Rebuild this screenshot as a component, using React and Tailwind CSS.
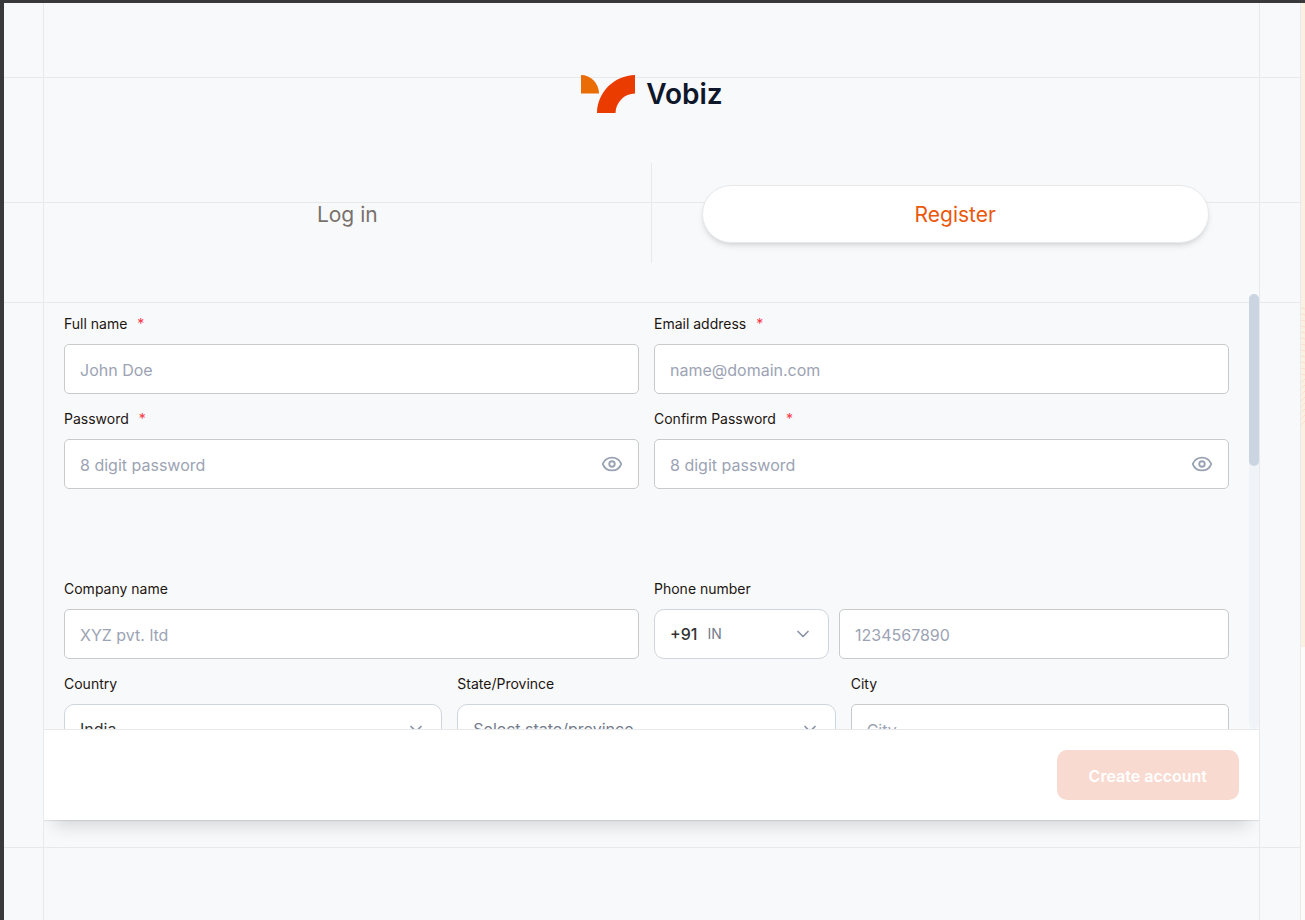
import React, { useState } from 'react';
import { Eye, EyeOff, ChevronDown } from 'lucide-react';

const inputClass = "w-full h-[50px] px-[15px] pt-0.5 bg-white border border-[#c9cacc] rounded-[5px] text-base text-gray-800 placeholder:text-[#9ca3b4] outline-none focus:border-orange-500";
const selectClass = "w-full h-[50px] px-[15px] bg-white border border-[#cfd5dc] rounded-[10px] text-base appearance-none outline-none focus:border-orange-500";

const Logo = () => (
    <div className="flex items-center gap-2.5">
        <svg width="56" height="40" viewBox="0 0 56 40" aria-hidden="true">
            <path d="M1 1A18 18.5 0 0 1 19 19.5H1Z" fill="#ea6c04" />
            <path d="M55 1V19.5A20 19.5 0 0 0 35.5 39H17C17.5 18 34 1.500 55 1Z" fill="#ea3c00" />
        </svg>
        <span className="text-[28px] leading-10 font-semibold text-[#0f172a]">Vobiz</span>
    </div>
);

const Field = ({ id, label, required, children }) => (
    <div>
        <label htmlFor={id} className="block mb-2.5 text-sm leading-5 text-[#1c1510]">
            {label}
            {required && <span className="ml-2.5 text-[#fb3748]">*</span>}
        </label>
        {children}
    </div>
);

const PasswordInput = ({ id, value, onChange }) => {
    const [visible, setVisible] = useState(false);
    const Icon = visible ? EyeOff : Eye;

    return (
        <div className="relative">
            <input id={id} type={visible ? 'text' : 'password'} value={value} onChange={onChange} placeholder="8 digit password" className={inputClass} />
            <button type="button" aria-label="Toggle password visibility" onClick={() => setVisible(!visible)} className="absolute right-4 top-[14px] text-[#98a2b3]">
                <Icon size={22} strokeWidth={2} />
            </button>
        </div>
    );
};

const SelectInput = ({ id, className, children }) => (
    <div className="relative">
        <select id={id} className={`${selectClass} ${className}`}>{children}</select>
        <ChevronDown size={20} className="absolute right-4 top-[15px] text-[#8a93a5] pointer-events-none" />
    </div>
);

// Lines that run behind the whole form column
const GridLines = () => (
    <div className="absolute inset-0 pointer-events-none" aria-hidden="true">
        <div className="absolute inset-x-0 top-[74px] h-px bg-[#e7e9eb]" />
        <div className="absolute inset-x-0 top-[199px] h-px bg-[#e7e9eb]" />
        <div className="absolute inset-x-0 top-[299px] h-px bg-[#e7e9eb]" />
        <div className="absolute inset-x-0 top-[844px] h-px bg-[#e7e9eb]" />
    </div>
);

const App = () => {
    const [form, setForm] = useState({ name: '', email: '', password: '', confirm: '', company: '', phone: '', city: '' });
    const set = (key) => (e) => setForm({ ...form, [key]: e.target.value });

    return (
        <div className="flex min-h-screen border-t-3 border-l-4 border-[#39383b] bg-[#f8f9fb] font-['Inter',sans-serif]">
            <main className="relative flex flex-1 pl-[39px] pr-10 border-r border-[#e7e9eb]">
                <GridLines />
                <div className="relative flex-1 min-w-0 border-x border-[#e7e9eb]">
                    <header className="flex justify-center pt-[71px] pb-[49px]">
                        <Logo />
                    </header>

                    {/* Tabs */}
                    <div className="grid grid-cols-2 h-[100px]">
                        <div className="flex items-center px-[50px] pt-0.5 border-r border-[#e7e9eb]">
                            <button className="w-full h-[58px] pt-0.5 rounded-full text-[21px] text-[#78716c]">Log in</button>
                        </div>
                        <div className="flex items-center px-[50px] pt-0.5">
                            <button className="w-full h-[58px] pt-0.5 rounded-full bg-white border border-[#e7e9eb] shadow-md text-[21px] text-[#ea580c]">Register</button>
                        </div>
                    </div>

                    <form onSubmit={e => e.preventDefault()} className="mt-[31px] shadow-[0_16px_16px_-10px_rgba(0,0,0,0.14),0_1px_1px_rgba(0,0,0,0.08)] [clip-path:inset(0_0_-50px_0)]">
                        <div className="flex h-[435px]">
                            <div className="flex-1 overflow-hidden p-5">
                                <div className="grid grid-cols-2 gap-[15px]">
                                    <Field id="name" label="Full name" required>
                                        <input id="name" value={form.name} onChange={set('name')} placeholder="John Doe" className={inputClass} />
                                    </Field>
                                    <Field id="email" label="Email address" required>
                                        <input id="email" type="email" value={form.email} onChange={set('email')} placeholder="name@domain.com" className={inputClass} />
                                    </Field>
                                    <Field id="password" label="Password" required>
                                        <PasswordInput id="password" value={form.password} onChange={set('password')} />
                                    </Field>
                                    <Field id="confirm" label="Confirm Password" required>
                                        <PasswordInput id="confirm" value={form.confirm} onChange={set('confirm')} />
                                    </Field>
                                </div>

                                <div className="grid grid-cols-2 gap-[15px] mt-[90px]">
                                    <Field id="company" label="Company name">
                                        <input id="company" value={form.company} onChange={set('company')} placeholder="XYZ pvt. ltd" className={inputClass} />
                                    </Field>
                                    <Field id="phone" label="Phone number">
                                        <div className="flex gap-2.5">
                                            <div className="relative flex items-center w-[175px] h-[50px] px-[15px] bg-white border border-[#cfd5dc] rounded-[10px]">
                                                <span className="text-base font-medium text-[#333]">+91</span>
                                                <span className="ml-2.5 text-sm text-[#737b8c]">IN</span>
                                                <ChevronDown size={20} className="ml-auto text-[#8a93a5]" />
                                                <select aria-label="Country code" className="absolute inset-0 w-full opacity-0">
                                                    <option>+91 IN</option>
                                                </select>
                                            </div>
                                            <div className="flex-1">
                                                <input id="phone" type="tel" value={form.phone} onChange={set('phone')} placeholder="1234567890" className={inputClass} />
                                            </div>
                                        </div>
                                    </Field>
                                </div>

                                <div className="grid grid-cols-3 gap-[15px] mt-[15px]">
                                    <Field id="country" label="Country">
                                        <SelectInput id="country" className="text-[#333]">
                                            <option>India</option>
                                        </SelectInput>
                                    </Field>
                                    <Field id="state" label="State/Province">
                                        <SelectInput id="state" className="text-[#737b8c]">
                                            <option>Select state/province</option>
                                        </SelectInput>
                                    </Field>
                                    <Field id="city" label="City">
                                        <input id="city" value={form.city} onChange={set('city')} placeholder="City" className={inputClass} />
                                    </Field>
                                </div>
                            </div>
                            {/* Scroll track */}
                            <div className="w-2.5 rounded-full bg-[#f0f4f9]">
                                <div className="h-[172px] rounded-full bg-[#cbd5e1]" />
                            </div>
                        </div>

                        <div className="flex justify-end p-5 bg-white border-t border-[#e7e9eb]">
                            <button type="submit" disabled className="h-[50px] px-8 pt-0.5 rounded-[10px] bg-[#f9dad0] text-base font-semibold text-white">Create account</button>
                        </div>
                    </form>
                </div>
            </main>

            <aside className="w-1 bg-[#fcfbf9]">
                <div className="h-[644px] pt-[302px] bg-[#faf1e2]">
                    <svg width="4" height="130" aria-hidden="true">
                        {Array.from({ length: 20 }, (_, i) => (
                            <path key={i} d={i < 12 ? `M0 ${i * 6 + 3}L4 ${i * 6 + 4}` : `M0 ${i * 6 + 6}L4 ${i * 6 + 2}`} stroke="#f9e0cb" />
                        ))}
                    </svg>
                </div>
            </aside>
        </div>
    );
};

export default App;
